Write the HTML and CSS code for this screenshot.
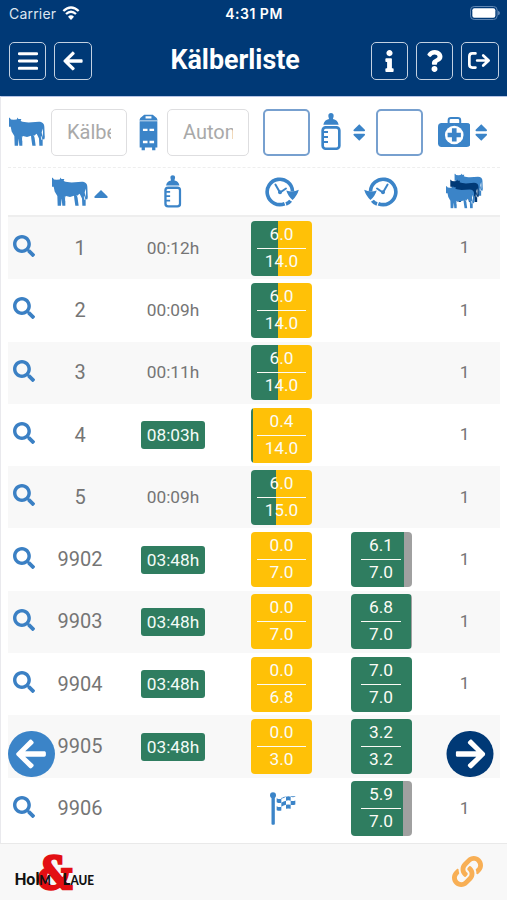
FILE: index.html
```html
<!DOCTYPE html>
<html lang="de">
<head>
<meta charset="utf-8">
<meta name="viewport" content="width=device-width, initial-scale=1">
<title>Kälberliste</title>
<link rel="stylesheet" href="styles.css">
</head>
<body>
<svg class="defs" aria-hidden="true">
  <symbol id="cow" viewBox="0 0 108 88"><path d="M2 2l4 5 8 1 9-1 3-6 2 5 9 0-2 6c8 3 14 4 24 4l30-2c10 0 17 5 17 15l1 26c1 6 0 10-2 13l-4-4 1-20-1-10-3 12 3 14v26h-10l-1-22-7-14-5 4-1 10 3 22h-10l-3-20-1-10-12 4-12-3-2 10v19h-9l-2-22-2 22h-10l-1-29-8-14-3-14-10 0-8 7-9-1-4-4 2-7 5-14-8-6z"/><path d="M40 58l1 13M75 54l3 8M97 58l1 10" fill="none" stroke="#fff" stroke-width="2.5"/></symbol>
  <symbol id="bottle" viewBox="0 0 60 112"><path d="M30 0c5 0 8 3 8 8 0 4-2 6-2 10 9 2 15 7 17 17H7c2-10 8-15 17-17 0-4-2-6-2-10 0-5 3-8 8-8z"/><rect x="5" y="43" width="50" height="64" rx="9" fill="none" stroke="currentColor" stroke-width="8"/><path d="M7 57h14M7 72h14M7 87h14" stroke="currentColor" stroke-width="6"/></symbol>
  <symbol id="search" viewBox="0 0 512 512"><path d="M505 442.7L405.3 343c-4.5-4.5-10.6-7-17-7H372c27.6-35.3 44-79.7 44-128C416 93.1 322.9 0 208 0S0 93.1 0 208s93.1 208 208 208c48.3 0 92.7-16.4 128-44v16.3c0 6.4 2.5 12.5 7 17l99.7 99.7c9.4 9.4 24.6 9.4 33.9 0l28.3-28.3c9.4-9.4 9.4-24.6.1-34zM208 336c-70.7 0-128-57.2-128-128 0-70.7 57.2-128 128-128 70.7 0 128 57.2 128 128 0 70.7-57.2 128-128 128z"/></symbol>
  <symbol id="arrow" viewBox="0 0 448 512"><path d="M257.5 445.1l-22.2 22.2c-9.4 9.4-24.6 9.4-33.9 0L7 273c-9.4-9.4-9.4-24.6 0-33.9L201.4 44.7c9.4-9.4 24.6-9.4 33.9 0l22.2 22.2c9.5 9.5 9.3 25-.4 34.3L136.6 216H424c13.3 0 24 10.7 24 24v32c0 13.3-10.7 24-24 24H136.6l120.5 114.8c9.8 9.3 10 24.8.4 34.3z"/></symbol>
  <symbol id="sort" viewBox="0 0 38 50"><path d="M19 0l17 17q2 4-2 4H4q-4 0-2-4zM19 50l17-17q2-4-2-4H4q-4 0-2 4z"/></symbol>
  <symbol id="clock" viewBox="0 0 102 94"><path d="M59 84A38.500 38.500 0 1 1 83 47" fill="none" stroke="currentColor" stroke-width="11"/><path d="M64 44q19 7 38-2-5 18-19 31-14-12-19-29z"/><path d="M63 85q9-3 14-10" fill="none" stroke="currentColor" stroke-width="11"/><path d="M31 26l14 24 18-12" fill="none" stroke="currentColor" stroke-width="6" stroke-linecap="round"/><circle cx="45" cy="49" r="6"/></symbol>
</svg>

<header class="top">
  <div class="status">
    <span class="carrier">Carrier</span>
    <svg class="wifi" viewBox="0 0 54 42"><path d="M4 15Q27-6 50 15M12 24Q27 10 42 24" fill="none" stroke="#fff" stroke-width="7"/><path d="M27 42l-9-10q9-8 18 0z" fill="#fff"/></svg>
    <span class="time">4:31 PM</span>
    <svg class="battery" viewBox="0 0 90 42"><rect x="1.500" y="1.500" width="80" height="39" rx="11" fill="none" stroke="#5f86b3" stroke-width="3"/><rect x="7" y="7" width="69" height="28" rx="6" fill="#fff"/><path d="M84 14q6 2 6 7t-6 7z" fill="#5f86b3"/></svg>
  </div>
  <div class="bar">
    <a class="btn"><svg class="i-menu" viewBox="0 0 60 54"><path d="M4 5h52M4 27h52M4 49h52" stroke="#fff" stroke-width="9" stroke-linecap="round"/></svg></a>
    <a class="btn"><svg class="i-back"><use href="#arrow"/></svg></a>
    <h1>Kälberliste</h1>
    <a class="btn"><svg class="i-info" viewBox="0 0 192 512"><path d="M20 424.229h20V279.771H20c-11.046 0-20-8.954-20-20V212c0-11.046 8.954-20 20-20h112c11.046 0 20 8.954 20 20v212.229h20c11.046 0 20 8.954 20 20V492c0 11.046-8.954 20-20 20H20c-11.046 0-20-8.954-20-20v-47.771c0-11.046 8.954-20 20-20zM96 0C56.235 0 24 32.235 24 72s32.235 72 72 72 72-32.235 72-72S135.764 0 96 0z"/></svg></a>
    <a class="btn"><svg class="i-help" viewBox="0 0 384 512"><path d="M202.021 0C122.202 0 70.503 32.703 29.914 91.026c-7.363 10.58-5.093 25.086 5.178 32.874l43.138 32.709c10.373 7.865 25.132 6.026 33.253-4.148 25.049-31.381 43.63-49.449 82.757-49.449 30.764 0 68.816 19.799 68.816 49.631 0 22.552-18.617 34.134-48.993 51.164-35.423 19.86-82.299 44.576-82.299 106.405V320c0 13.255 10.745 24 24 24h72.471c13.255 0 24-10.745 24-24v-5.773c0-42.86 125.268-44.645 125.268-160.627C377.504 66.256 286.902 0 202.021 0zM192 373.459c-38.196 0-69.271 31.075-69.271 69.271 0 38.195 31.075 69.27 69.271 69.27s69.271-31.075 69.271-69.271-31.075-69.27-69.271-69.27z"/></svg></a>
    <a class="btn"><svg class="i-exit" viewBox="0 0 68 50"><path d="M22 4H13Q4 4 4 13v24q0 9 9 9h9M27 25h32M45 10l16 15-16 15" fill="none" stroke="#fff" stroke-width="8" stroke-linecap="round" stroke-linejoin="round"/></svg></a>
  </div>
</header>

<main class="page">
  <div class="filters">
    <svg class="cow"><use href="#cow"/></svg>
    <div class="field calf"><span>Kälber</span></div>
    <svg class="feeder" viewBox="0 0 58 112"><path d="M16 2h26l12 10 3 7H1l3-7zM2 22h54v80H50v8H40v-8H18v8H8v-8H2z"/><path d="M20 10h18M12 48h14M32 48h14M12 85h14M32 85h14" stroke="#fff" stroke-width="7"/></svg>
    <div class="field auto"><span>Autom</span></div>
    <div class="check c1"></div>
    <svg class="bottle"><use href="#bottle"/></svg>
    <svg class="sort s1"><use href="#sort"/></svg>
    <div class="check c2"></div>
    <svg class="medkit" viewBox="0 0 98 90"><path d="M32 19V10q0-7 7-7h21q7 0 7 7v9" fill="none" stroke="currentColor" stroke-width="6"/><rect y="18" width="98" height="72" rx="11"/><circle cx="49" cy="54" r="28" fill="#fff"/><path d="M42 34h14v13h13v14H56v13H42V61H29V47h13z"/></svg>
    <svg class="sort s2"><use href="#sort"/></svg>
  </div>

  <div class="row head">
    <span></span>
    <span class="by-calf"><svg class="cow"><use href="#cow"/></svg><svg class="up" viewBox="0 0 42 24"><path d="M21 0l19 19q3 5-2 5H4q-5 0-2-5z"/></svg></span>
    <span><svg class="bottle small"><use href="#bottle"/></svg></span>
    <span><svg class="clock"><use href="#clock"/></svg></span>
    <span><svg class="clock flip"><use href="#clock"/></svg></span>
    <span><svg class="herd" viewBox="0 0 112 108"><use href="#cow" x="26" y="0" width="86" height="70"/><g class="navy"><use href="#cow" x="13" y="18" width="87" height="71"/></g><use href="#cow" x="0" y="38" width="87" height="70"/></svg></span>
  </div>

  <div class="row"><svg class="find"><use href="#search"/></svg><b>1</b><span><i>00:12h</i></span><span><span class="box today" style="--p:43.500%"><em>6.0</em><em>14.0</em></span></span><span></span><span>1</span></div>
  <div class="row"><svg class="find"><use href="#search"/></svg><b>2</b><span><i>00:09h</i></span><span><span class="box today" style="--p:43.500%"><em>6.0</em><em>14.0</em></span></span><span></span><span>1</span></div>
  <div class="row"><svg class="find"><use href="#search"/></svg><b>3</b><span><i>00:11h</i></span><span><span class="box today" style="--p:43.500%"><em>6.0</em><em>14.0</em></span></span><span></span><span>1</span></div>
  <div class="row"><svg class="find"><use href="#search"/></svg><b>4</b><span><i class="alarm">08:03h</i></span><span><span class="box today" style="--p:3.500%"><em>0.4</em><em>14.0</em></span></span><span></span><span>1</span></div>
  <div class="row"><svg class="find"><use href="#search"/></svg><b>5</b><span><i>00:09h</i></span><span><span class="box today" style="--p:40.500%"><em>6.0</em><em>15.0</em></span></span><span></span><span>1</span></div>
  <div class="row"><svg class="find"><use href="#search"/></svg><b>9902</b><span><i class="alarm">03:48h</i></span><span><span class="box today" style="--p:0%"><em>0.0</em><em>7.0</em></span></span><span><span class="box past" style="--p:87%"><em>6.1</em><em>7.0</em></span></span><span>1</span></div>
  <div class="row"><svg class="find"><use href="#search"/></svg><b>9903</b><span><i class="alarm">03:48h</i></span><span><span class="box today" style="--p:0%"><em>0.0</em><em>7.0</em></span></span><span><span class="box past" style="--p:98%"><em>6.8</em><em>7.0</em></span></span><span>1</span></div>
  <div class="row"><svg class="find"><use href="#search"/></svg><b>9904</b><span><i class="alarm">03:48h</i></span><span><span class="box today" style="--p:0%"><em>0.0</em><em>6.8</em></span></span><span><span class="box past" style="--p:100%"><em>7.0</em><em>7.0</em></span></span><span>1</span></div>
  <div class="row"><span></span><b>9905</b><span><i class="alarm">03:48h</i></span><span><span class="box today" style="--p:0%"><em>0.0</em><em>3.0</em></span></span><span><span class="box past" style="--p:100%"><em>3.2</em><em>3.2</em></span></span><span></span></div>
  <div class="row"><svg class="find"><use href="#search"/></svg><b>9906</b><span></span><span><svg class="flag" viewBox="0 0 78 98"><circle cx="9" cy="9" r="9"/><rect x="4.500" y="8" width="10" height="90" rx="3"/><path d="M20 18q7 4 14 2v12q-7 2-14-2zM48 14q7-3 14 0v12q-7-3-14 0zM34 32q7-4 14-6v12q-7 2-14 6zM62 26q7 2 14-1v12q-7 3-14 1zM20 42q7 4 14 2v11q-7 2-14-1zM48 38q7-2 14 0v12q-7-2-14 0zM34 15q-2 4 0 5 7-2 14-6v-1q-7 0-14 5zM62 12h14v2q-7 2-14 0z"/></svg></span><span><span class="box past" style="--p:85%"><em>5.9</em><em>7.0</em></span></span><span>1</span></div>

  <a class="nav prev"><svg><use href="#arrow"/></svg></a>
  <a class="nav next"><svg><use href="#arrow"/></svg></a>
</main>

<footer class="foot">
  <svg class="logo" viewBox="0 0 82 40">
    <text class="amp" x="23.500" y="37" textLength="35" lengthAdjust="spacingAndGlyphs">&amp;</text>
    <text class="word" x="0.500" y="32.500" textLength="36.500" lengthAdjust="spacingAndGlyphs">Hol<tspan class="sc">M</tspan></text>
    <text class="word" x="48.500" y="32.500" textLength="31.500" lengthAdjust="spacingAndGlyphs">L<tspan class="sc">AUE</tspan></text>
  </svg>
  <svg class="link" viewBox="0 0 512 512"><path d="M326.612 185.391c59.747 59.809 58.927 155.698.36 214.59-.11.12-.24.25-.36.37l-67.2 67.2c-59.27 59.27-155.699 59.262-214.96 0-59.27-59.26-59.27-155.7 0-214.96l37.106-37.106c9.84-9.84 26.786-3.3 27.294 10.606.648 17.722 3.826 35.527 9.69 52.721 1.986 5.822.567 12.262-3.783 16.612l-13.087 13.087c-28.026 28.026-28.905 73.66-1.155 101.96 28.024 28.579 74.086 28.749 102.325.51l67.2-67.19c28.191-28.191 28.073-73.757 0-101.83-3.701-3.694-7.429-6.564-10.341-8.569a16.037 16.037 0 0 1-6.947-12.606c-.396-10.567 3.348-21.456 11.698-29.806l21.054-21.055c5.521-5.521 14.182-6.199 20.584-1.731a152.482 152.482 0 0 1 20.522 17.197zM467.547 44.449c-59.261-59.262-155.69-59.27-214.96 0l-67.2 67.2c-.12.12-.25.25-.36.37-58.566 58.892-59.387 154.781.36 214.59a152.454 152.454 0 0 0 20.521 17.196c6.402 4.468 15.064 3.789 20.584-1.731l21.054-21.055c8.35-8.35 12.094-19.239 11.698-29.806a16.037 16.037 0 0 0-6.947-12.606c-2.912-2.005-6.64-4.875-10.341-8.569-28.073-28.073-28.191-73.639 0-101.83l67.2-67.19c28.239-28.239 74.3-28.069 102.325.51 27.75 28.3 26.872 73.934-1.155 101.96l-13.087 13.087c-4.35 4.35-5.769 10.79-3.783 16.612 5.864 17.194 9.042 34.999 9.69 52.721.509 13.906 17.454 20.446 27.294 10.606l37.106-37.106c59.271-59.259 59.271-155.699.001-214.959z"/></svg>
</footer>
</body>
</html>
```
FILE: styles.css
```css
* { box-sizing: border-box; }
body {
  margin: 0;
  height: 900px;
  overflow: hidden;
  background: #fff;
  color: #757575;
  font-family: Roboto, "Liberation Sans", sans-serif;
  font-size: 17.3px;
}
svg { display: block; fill: currentColor; flex: none; }
.defs { position: absolute; width: 0; height: 0; }

/* header */
.top { height: 96px; background: #003976; color: #fff; }
.status {
  display: grid;
  grid-template-columns: 53px 145px 94px 1fr;
  align-items: center;
  height: 28px;
  padding: 0 9px;
  font: 500 14px/28px Inter, sans-serif;
}
.carrier { font-weight: 400; letter-spacing: .2px; color: #dde6f0; }
.wifi { width: 18px; height: 14px; margin-top: -2px; }
.time { text-align: center; font-weight: 600; font-size: 14px; letter-spacing: .5px; white-space: nowrap; }
.battery { width: 30px; height: 14px; justify-self: end; margin-right: -2px; margin-top: -2px; }
.bar { display: flex; align-items: center; gap: 8px; padding: 14px 8.5px 0 9px; }
.btn {
  display: grid;
  place-items: center;
  width: 37.300px;
  height: 37.500px;
  border: 1.500px solid #c3d1e1;
  border-radius: 5px;
}
h1 { flex: 1; margin: 0; font-size: 26.800px; line-height: 34px; padding-bottom: 2px; font-weight: 700; text-align: center; transform: translateX(4px); }
.i-menu { width: 20px; height: 18px; }
.i-back { width: 20px; height: 22px; }
.i-info { width: 9px; height: 22px; }
.i-help { width: 17px; height: 22px; }
.i-exit { width: 23px; height: 17px; }

/* filters */
.page { position: relative; height: 747px; padding: 0 7px; border-left: 1px solid #e9e9ed; border-top: 1px solid #b5c4e6; }
.filters {
  display: flex;
  align-items: center;
  height: 71px;
  padding-left: 1px;
  color: #3b84c8;
  border-bottom: 1px dashed #eee;
}
.cow { width: 36px; height: 29.500px; }
.field { height: 47px; border: 1.500px solid #dedee0; border-radius: 5px; padding: 0 15px; font-size: 20px; line-height: 45px; color: #a9a9a9; }
.field span { display: block; overflow: hidden; white-space: nowrap; }
.calf { width: 76px; margin-left: 6px; }
.auto { width: 82px; margin-left: 9px; }
.feeder { width: 19px; height: 37px; margin-left: 12px; }
.check { width: 46.500px; height: 47px; border: 2px solid #77a0cf; border-radius: 5px; }
.c1 { margin-left: 14px; }
.c2 { margin-left: 11px; }
.bottle { width: 20px; height: 37.500px; margin-left: 11.500px; }
.sort { width: 12.500px; height: 17px; }
.s1 { margin-left: 11.500px; }
.s2 { margin-left: 5px; }
.medkit { width: 32.500px; height: 30px; margin-left: 15px; }

/* table */
.row {
  display: grid;
  grid-template-columns: 32px 80px 106px 111px 88px 75px;
  align-items: center;
  justify-items: center;
  height: 62.300px;
}
.row > :last-child { padding-left: 4px; }
.row:nth-of-type(odd) { background: #f8f8f8; }
.row.head { height: 49px; background: #fff; color: #3b84c8; border-bottom: 2px solid #eee; }
.by-calf { display: flex; align-items: center; gap: 6px; }
.up { width: 14px; height: 8px; margin-top: 5px; }
.bottle.small { width: 17.500px; height: 33px; margin: 0; }
.clock { width: 34px; height: 31px; }
.flip { transform: scaleX(-1); }
.herd { width: 37px; height: 36px; }
.navy { color: #003976; fill: #003976; }
.find { width: 22px; height: 22px; color: #3b80c4; margin-top: -4px; }
.row b { font-weight: 400; font-size: 20px; line-height: 24px; margin-top: -1px; }
.row > :last-child { margin-top: -1.500px; }
.row i { display: block; font-style: normal; line-height: 28px; padding: 0 6px; border-radius: 3px; margin-top: -1px; }
.row i.alarm { background: #2f7d60; color: #f3fbf7; margin-top: 0; }
.box {
  display: grid;
  grid-template-rows: 28px 27px;
  justify-items: center;
  width: 61px;
  height: 55px;
  border-radius: 4px;
  color: #fbfbf5;
  background: linear-gradient(90deg, #2f7d60 var(--p), #ffc107 var(--p));
}
.box.past { background: linear-gradient(90deg, #2f7d60 var(--p), #a0a0a0 var(--p)); }
.box em { font-style: normal; line-height: 27px; height: 28px; width: 49px; text-align: center; }
.past em { width: 40px; }
.box em:first-child { border-bottom: 1.500px solid currentColor; }
.box em:last-child { line-height: 25px; }
.flag { width: 26px; height: 33px; color: #3b84c8; margin-left: 3px; }

/* page turning, floating over the list */
.nav { position: absolute; top: 633.500px; display: grid; place-items: center; width: 46.500px; height: 46.500px; border-radius: 50%; color: #fff; }
.nav svg { width: 30px; height: 34px; }
.prev { left: 7px; background: #3b84c8; }
.next { left: 446px; background: #003976; transform: scaleX(-1); }

/* footer */
.foot { display: flex; justify-content: space-between; align-items: center; height: 57px; padding: 0 24.500px 0 14px; background: #f8f8f8; border-top: 1.500px solid #e9e9e9; }
.logo { width: 82px; height: 40px; overflow: visible; }
.amp { font: 700 44px "DejaVu Serif", serif; fill: #e30f13; stroke: #e30f13; stroke-width: 2.500px; }
.word { font: 900 16px Lato, sans-serif; fill: #111; }
.sc { font-size: 12.500px; }
.link { width: 31px; height: 31px; margin-top: -2px; color: #f8af55; }
```
